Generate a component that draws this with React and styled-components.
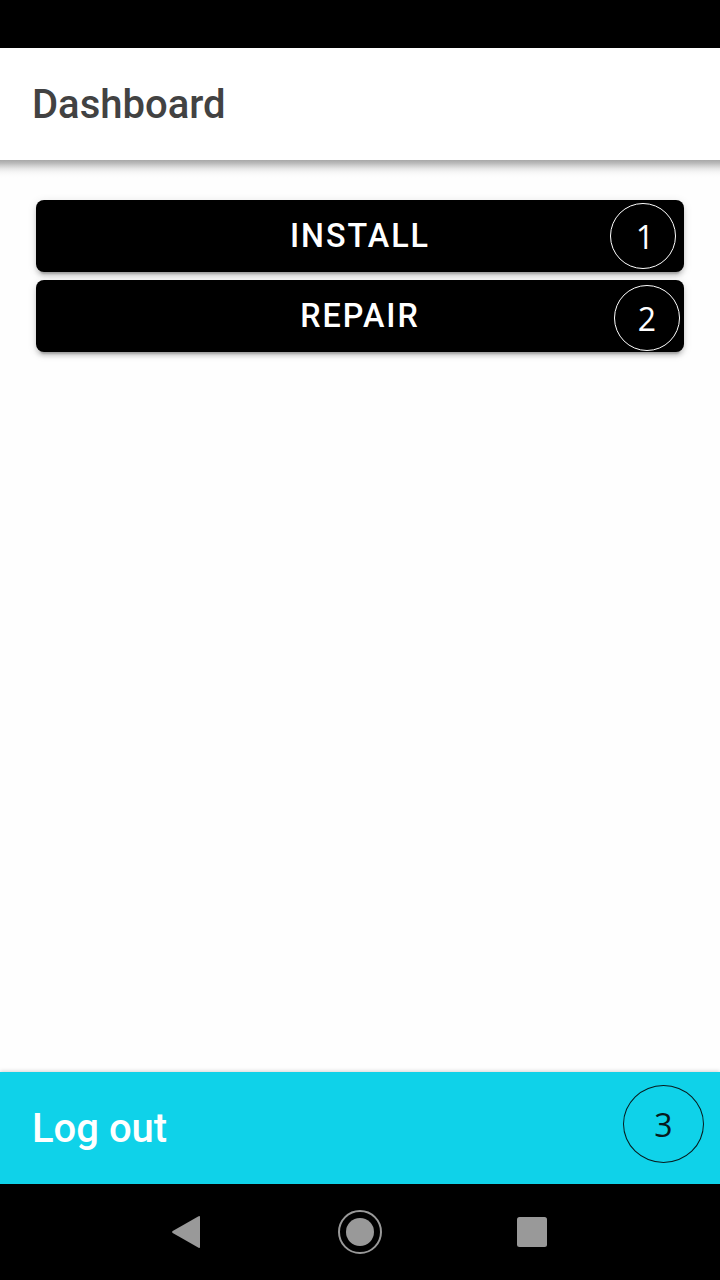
import React from "react";
import styled, { createGlobalStyle } from "styled-components";

const GlobalStyle = createGlobalStyle`
  * { box-sizing: border-box; }
  body { margin: 0; background: #000; font-family: Roboto, "Liberation Sans", sans-serif; }
`;

const Screen = styled.div`
  display: flex;
  flex-direction: column;
  width: 720px;
  height: 1280px;
  overflow: hidden;
  background: #fefefe;
`;

const StatusBar = styled.div`
  flex: none;
  height: 48px;
  background: #000;
`;

const Toolbar = styled.header`
  flex: none;
  display: flex;
  align-items: center;
  height: 112px;
  padding: 2px 33px 0 32px;
  background: #fff;
`;

const Title = styled.h1`
  margin: 0;
  font-size: 40px;
  font-weight: 500;
  line-height: 48px;
  color: ${(p) => p.$color};
`;

const Content = styled.main`
  flex: 1;
  display: flex;
  flex-direction: column;
  gap: 8px;
  padding: 40px 36px 0;
  background: linear-gradient(
    to bottom,
    #a8a8a8 0,
    #b9b9b9 3px,
    #d2d2d2 6px,
    #e8e8e8 9px,
    #f5f5f5 12px,
    #fcfcfc 15px,
    #fefefe 18px
  );
`;

const ActionButton = styled.button`
  position: relative;
  display: flex;
  flex: none;
  align-items: center;
  justify-content: center;
  width: 100%;
  height: 72px;
  padding: 0;
  border: 0;
  border-radius: 8px;
  background: #000;
  color: #fff;
  font-family: inherit;
  font-size: 32.3px;
  font-weight: 500;
  letter-spacing: 0.062em;
  line-height: 38px;
  text-transform: uppercase;
  box-shadow:
    0 6px 2px -4px rgba(0, 0, 0, 0.2),
    0 4px 4px 0 rgba(0, 0, 0, 0.14),
    0 2px 10px 0 rgba(0, 0, 0, 0.12);
`;

const StepBadge = styled.span`
  position: absolute;
  top: ${(p) => p.$top}px;
  right: ${(p) => p.$right}px;
  display: flex;
  align-items: center;
  justify-content: center;
  width: ${(p) => p.$width || 66}px;
  height: ${(p) => p.$height || 66}px;
  padding: ${(p) => p.$pad || "2px 0 0 0"};
  border: 1px solid currentColor;
  border-radius: 50%;
  color: ${(p) => p.$color || "#fff"};
  font-family: "Open Sans", "Noto Sans", sans-serif;
  font-size: 32px;
  font-weight: 400;
  letter-spacing: 0;
  line-height: 44px;
`;

const Footer = styled.footer`
  position: relative;
  flex: none;
  display: flex;
  align-items: center;
  height: 112px;
  padding: 2px 32px 0;
  background: #0fd2e9;
  box-shadow: 0 -1px 4px rgba(0, 0, 0, 0.16);
`;

const NavBar = styled.nav`
  flex: none;
  display: flex;
  align-items: center;
  justify-content: center;
  gap: 128px;
  height: 96px;
  background: #000;
`;

const NavIcon = styled.svg`
  display: block;
  width: 44px;
  height: 44px;
  fill: #999;
`;

export default function App() {
  return (
    <>
      <GlobalStyle />
      <Screen>
        <StatusBar />
        <Toolbar>
          <Title $color="#424242">Dashboard</Title>
        </Toolbar>
        <Content>
          <ActionButton>
            Install
            <StepBadge $top={3} $right={8} $pad="2px 0 0 4px">1</StepBadge>
          </ActionButton>
          <ActionButton>
            Repair
            <StepBadge $top={5} $right={4}>2</StepBadge>
          </ActionButton>
        </Content>
        <Footer>
          <Title $color="#fff">Log out</Title>
          <StepBadge $top={13} $right={16} $width={81} $height={78} $color="#071a1d">
            3
          </StepBadge>
        </Footer>
        <NavBar>
          <NavIcon viewBox="0 0 44 44">
            <path d="M6.7 21.1 32.6 6.2Q34 5.5 34 7V37Q34 38.5 32.6 37.8L6.7 22.9Q5.2 22 6.7 21.1Z" />
          </NavIcon>
          <NavIcon viewBox="0 0 44 44">
            <circle cx="22" cy="22" r="14" />
            <circle cx="22" cy="22" r="21" fill="none" stroke="#999" strokeWidth="2" />
          </NavIcon>
          <NavIcon viewBox="0 0 44 44">
            <rect x="7" y="7" width="30" height="30" rx="2.5" />
          </NavIcon>
        </NavBar>
      </Screen>
    </>
  );
}
